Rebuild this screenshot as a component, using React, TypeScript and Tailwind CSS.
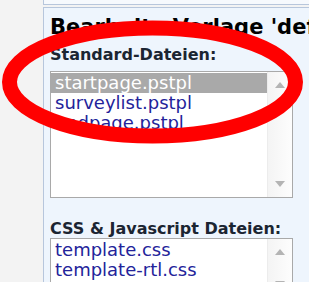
import { ReactNode } from "react";

const STANDARD_FILES = ["startpage.pstpl", "surveylist.pstpl", "endpage.pstpl"];
const CSS_FILES = ["template.css", "template-rtl.css", "template.js"];

function Scrollbar() {
  return (
    <div className="w-[25px] shrink-0 flex flex-col justify-between items-center py-[10px] bg-gradient-to-r from-[#f4f4f4] to-[#fdfdfd] border-l border-[#ececec]">
      <svg width="10" height="6" viewBox="0 0 10 6">
        <polygon points="0,6 10,6 5,0" fill="#b4b4b4" />
      </svg>
      <svg width="10" height="6" viewBox="0 0 10 6">
        <polygon points="0,0 10,0 5,6" fill="#b4b4b4" />
      </svg>
    </div>
  );
}

function FileList({ items, selected, height }: { items: string[]; selected?: number; height: string }) {
  return (
    <div className={`flex w-[243px] ${height} border border-[#a9a9a9] bg-white overflow-hidden`}>
      <ul className="flex-1 pt-[1px] overflow-hidden">
        {items.map((name, idx) => (
          <li
            key={name}
            className={`h-[20px] leading-[20px] pl-[4px] text-[18px] whitespace-nowrap ${
              idx === selected ? "bg-[#a9a9a9] text-white" : "text-[#23239a]"
            }`}
          >
            {name}
          </li>
        ))}
      </ul>
      <Scrollbar />
    </div>
  );
}

function Label({ children, className }: { children: ReactNode; className?: string }) {
  return <div className={`text-[16px] font-bold leading-[18px] text-[#1b2532] ${className ?? ""}`}>{children}</div>;
}

export default function App() {
  return (
    <div
      className="relative w-[309px] h-[282px] overflow-hidden bg-[#f3f3f3] pl-[43px]"
      style={{ fontFamily: '"DejaVu Sans", Verdana, sans-serif' }}
    >
      <div className="flex flex-col h-full">
        {/* strip of the box above */}
        <div className="h-[5px] shrink-0 bg-[#f6f9fd] border-l border-b border-[#b7c6dc]" />

        {/* template editor panel */}
        <div className="mt-[2px] flex-1 bg-[#eef5fd] border-l border-t border-[#b7c6dc] pl-[6px] pt-[7px]">
          <h2 className="text-[21px] font-bold leading-[24px] text-black whitespace-nowrap">
            Bearbeite Vorlage 'default'
          </h2>
          <Label className="mt-[7px] mb-[7px]">Standard-Dateien:</Label>
          <FileList items={STANDARD_FILES} selected={0} height="h-[127px]" />
          <Label className="mt-[22px]">CSS &amp; Javascript Dateien:</Label>
          <FileList items={CSS_FILES} height="h-[60px]" />
        </div>
      </div>

      {/* red marker ellipse drawn over the screenshot */}
      <svg className="absolute left-0 top-0 pointer-events-none" width="309" height="282" viewBox="0 0 309 282">
        <ellipse cx="152.5" cy="82" rx="143" ry="54" fill="none" stroke="#ff0000" strokeWidth="15" />
      </svg>
    </div>
  );
}
